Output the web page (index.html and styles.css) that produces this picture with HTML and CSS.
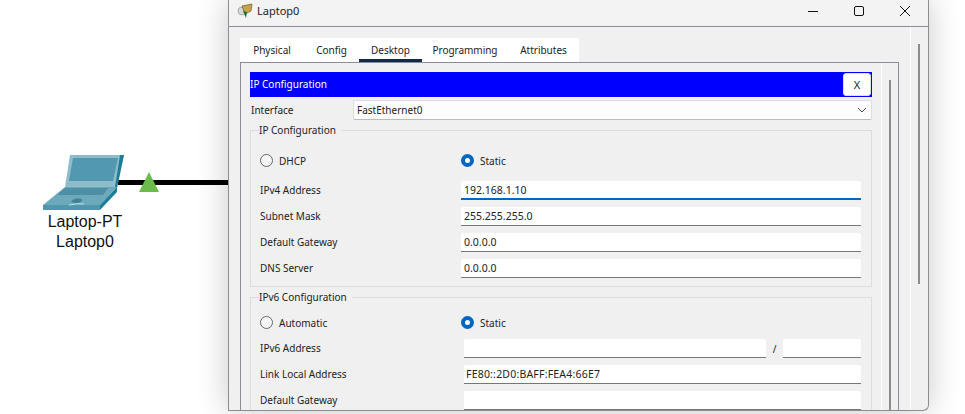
FILE: index.html
```html
<!DOCTYPE html>
<html lang="en">
<head>
    <meta charset="UTF-8">
    <title>Laptop0</title>
    <link rel="stylesheet" href="styles.css">
</head>
<body>

    <div class="canvas">
        <div class="link"></div>
        <svg class="link-light" width="20" height="20" viewBox="0 0 20 20"><polygon points="10,0 20,20 0,20" fill="#6cbb4b"/></svg>
        <div class="device">
            <svg width="82" height="56" viewBox="0 0 82 56">
                <polygon points="27,0 81,0 74,32 22,32" fill="#8fbccb"/>
                <polygon points="77,0 81,0 74,33 72,32" fill="#1c7d96"/>
                <polygon points="30,3 75,3 70,26 26,26" fill="#5298b0"/>
                <polygon points="22,32 74,32 57,50 0,50" fill="#6ca9bb"/>
                <polygon points="22,33 65,33 60,40 14,40" fill="#4d8fa5"/>
                <rect x="0" y="50" width="57" height="5" fill="#4f97ad"/>
                <polygon points="74,32 74,37 57,55 57,50" fill="#1c7d96"/>
                <path d="M28 46 q5 -4 10 -2 q3 2 -3 4 q-4 1 -7 -2z" fill="#3f8296"/>
                <path d="M26 50 q8 -2 15 -1" stroke="#c9e0e8" fill="none"/>
            </svg>
            <div class="device-name">Laptop-PT</div>
            <div class="device-name">Laptop0</div>
        </div>
    </div>

    <div class="window">
        <div class="titlebar">
            <svg class="app-icon" width="16" height="16" viewBox="0 0 16 16">
                <circle cx="5" cy="8" r="4" fill="#d9d9d9" stroke="#aaa"/>
                <polygon points="5,3 15,1 14,8 8,11" fill="#c9a24b" stroke="#6b5a20" stroke-width=".7"/>
                <polygon points="6,8 10,9 9,15" fill="#0d7a2c"/>
            </svg>
            <span class="title">Laptop0</span>
            <div class="win-buttons">
                <svg width="12" height="12" viewBox="0 0 12 12"><path d="M1 6.500h10" stroke="#111" fill="none"/></svg>
                <svg width="12" height="12" viewBox="0 0 12 12"><rect x="1.500" y="1.500" width="9" height="9" rx="1.500" stroke="#111" fill="none"/></svg>
                <svg width="12" height="12" viewBox="0 0 12 12"><path d="M1 1l10 10M11 1L1 11" stroke="#111" fill="none"/></svg>
            </div>
        </div>

        <div class="window-body">
            <div class="main">
                <div class="tabs">
                    <div class="tab tab-physical">Physical</div>
                    <div class="tab tab-config">Config</div>
                    <div class="tab tab-desktop active">Desktop</div>
                    <div class="tab tab-programming">Programming</div>
                    <div class="tab tab-attributes">Attributes</div>
                </div>

                <div class="panel">
                    <div class="panel-main">
                        <div class="blue-bar">
                            <span class="bar-title">IP Configuration</span>
                            <button class="close-btn">X</button>
                        </div>

                        <div class="interface-row">
                            <label>Interface</label>
                            <div class="select">
                                <span>FastEthernet0</span>
                                <svg width="10" height="6" viewBox="0 0 10 6"><path d="M1 1l4 4 4-4" stroke="#555" fill="none"/></svg>
                            </div>
                        </div>

                        <fieldset class="group group-v4">
                            <legend>IP Configuration</legend>
                            <div class="radio-row">
                                <div class="radio-left"><span class="radio"></span>DHCP</div>
                                <div class="radio-right"><span class="radio checked"></span>Static</div>
                            </div>
                            <div class="field"><label>IPv4 Address</label><input class="focused" type="text" value="192.168.1.10"></div>
                            <div class="field"><label>Subnet Mask</label><input type="text" value="255.255.255.0"></div>
                            <div class="field"><label>Default Gateway</label><input type="text" value="0.0.0.0"></div>
                            <div class="field"><label>DNS Server</label><input type="text" value="0.0.0.0"></div>
                        </fieldset>

                        <fieldset class="group group-v6">
                            <legend>IPv6 Configuration</legend>
                            <div class="radio-row">
                                <div class="radio-left"><span class="radio"></span>Automatic</div>
                                <div class="radio-right"><span class="radio checked"></span>Static</div>
                            </div>
                            <div class="field v6">
                                <label>IPv6 Address</label>
                                <input class="addr" type="text">
                                <span class="slash">/</span>
                                <input class="prefix" type="text">
                            </div>
                            <div class="field v6"><label>Link Local Address</label><input class="link-local" type="text" value="FE80::2D0:BAFF:FEA4:66E7"></div>
                            <div class="field v6"><label>Default Gateway</label><input type="text"></div>
                        </fieldset>
                    </div>
                    <div class="panel-scroll"><div class="inner-thumb"></div></div>
                </div>
            </div>
            <div class="outer-scroll"><div class="outer-thumb"></div></div>
        </div>
    </div>

</body>
</html>
```

FILE: styles.css
```css
html, body {
    margin: 0;
    height: 414px;
    overflow: hidden;
}
body {
    display: flex;
    align-items: flex-start;
    background-color: #fff;
    font-family: "Noto Sans", sans-serif;
    font-size: 10px;
    color: #222;
}

/* logical workspace */
.canvas {
    position: relative;
    flex: none;
    width: 228px;
    height: 414px;
}
.link {
    position: absolute;
    left: 118px;
    top: 180px;
    width: 110px;
    height: 5px;
    background-color: #000;
}
.link-light {
    position: absolute;
    left: 139px;
    top: 172px;
}
.device {
    position: absolute;
    left: 43px;
    top: 155px;
    width: 84px;
    text-align: center;
    font-family: "Liberation Sans", sans-serif;
    font-size: 16px;
    line-height: 20px;
    color: #111;
}
.device svg {
    display: block;
    margin-bottom: 1px;
}

/* dialog */
.window {
    position: relative;
    flex: none;
    display: flex;
    flex-direction: column;
    box-sizing: border-box;
    width: 701px;
    height: 411px;
    background-color: #f0f0f0;
    border: 1px solid #8b8d94;
    border-top: none;
    border-bottom-right-radius: 6px;
    box-shadow: 0 0 32px rgba(0, 0, 0, 0.22);
}
.titlebar {
    flex: none;
    display: flex;
    align-items: center;
    box-sizing: border-box;
    height: 27px;
    padding: 0 0 5px 8px;
    background-color: #f3f3f3;
    border-bottom: 1px solid #8a8d98;
}
.app-icon {
    margin-right: 4px;
}
.title {
    font-size: 11px;
}
.win-buttons {
    display: flex;
    gap: 34px;
    margin-left: auto;
    margin-right: 17px;
}
.window-body {
    flex: 1;
    display: flex;
    min-height: 0;
}
.main {
    flex: none;
    box-sizing: border-box;
    width: 682px;
    padding: 11px 0 0 11px;
    border-right: 1px solid #fff;
}
.tabs {
    display: flex;
    width: 339px;
    height: 24px;
    background-color: #fff;
}
.tab {
    box-sizing: border-box;
    height: 24px;
    padding-top: 5px;
    text-align: center;
}
.tab-physical { width: 64px; }
.tab-config { width: 55px; }
.tab-desktop { width: 63px; }
.tab-programming { width: 86px; letter-spacing: -0.05px; }
.tab-attributes { width: 71px; }
.tab.active {
    border-bottom: 3px solid #12294a;
}
.panel {
    display: flex;
    box-sizing: border-box;
    width: 659px;
    height: 348px;
    border: 1px solid #8a8d98;
    border-bottom: none;
}
.panel-main {
    flex: none;
    box-sizing: border-box;
    width: 641px;
    padding: 9px 9px 0 9px;
    border-right: 1px solid #fff;
    overflow: hidden;
}
.panel-scroll {
    flex: 1;
    padding: 17px 0 0 7px;
}
.inner-thumb {
    width: 2px;
    height: 330px;
    background-color: #8c8c8c;
}
.outer-scroll {
    flex: 1;
    padding: 17px 0 0 7px;
}
.outer-thumb {
    width: 2px;
    height: 240px;
    background-color: #8c8c8c;
}

.blue-bar {
    display: flex;
    align-items: center;
    justify-content: space-between;
    height: 25px;
    padding-right: 1px;
    background-color: #0000ff;
    color: #fff;
}
.bar-title {
    padding-bottom: 2px;
}
.close-btn {
    width: 28px;
    height: 23px;
    padding: 0;
    background-color: #fff;
    border: 1px solid #ddd;
    border-radius: 3px;
    font-family: "Noto Sans", sans-serif;
    font-size: 11px;
    color: #222;
}
.interface-row {
    display: flex;
    align-items: center;
    margin-top: 3px;
    padding-left: 1px;
}
.interface-row label {
    width: 102px;
}
.select {
    flex: 1;
    display: flex;
    align-items: center;
    justify-content: space-between;
    box-sizing: border-box;
    height: 20px;
    padding: 0 4px 0 3px;
    background-color: #fdfdfd;
    border: 1px solid #ddd;
    border-bottom-color: #bbb;
    border-radius: 2px;
}

.group {
    box-sizing: border-box;
    width: 622px;
    min-width: 0;
    margin: 4px 0 0;
    padding: 0 10px 0 9px;
    border: 1px solid #dcdcdc;
}
.group-v4 {
    height: 163px;
}
.group-v6 {
    height: 120px;
    margin-top: 4px;
}
.group legend {
    margin-left: -1px;
    padding: 0;
    padding-right: 5px;
    line-height: 13px;
}
.radio-row {
    display: flex;
    align-items: center;
    height: 13px;
    margin-top: 17px;
}
.group-v6 .radio-row {
    margin-top: 12px;
}
.radio-left, .radio-right {
    display: flex;
    align-items: center;
    gap: 6px;
}
.radio-left {
    width: 201px;
}
.radio {
    box-sizing: border-box;
    width: 13px;
    height: 13px;
    background-color: #f5f5f5;
    border: 1px solid #666;
    border-radius: 50%;
}
.radio.checked {
    background-color: #fff;
    border: 4px solid #0067c0;
}
.field {
    display: flex;
    align-items: center;
    margin-top: 7px;
}
.radio-row + .field {
    margin-top: 14px;
}
.group-v6 .radio-row + .field {
    margin-top: 10px;
}
.field label {
    flex: none;
    width: 201px;
    padding-bottom: 2px;
}
.field.v6 label {
    width: 204px;
}
.field input {
    flex: 1;
    min-width: 0;
    box-sizing: border-box;
    height: 19px;
    padding: 0 3px;
    background-color: #fff;
    border: none;
    border-bottom: 1px solid #777;
    border-radius: 2px 2px 0 0;
    font-family: "Noto Sans", sans-serif;
    font-size: 10.5px;
    color: #222;
}
.field input.link-local {
    padding-left: 2px;
    letter-spacing: 0.2px;
}
.field input.focused {
    border-bottom: 2px solid #0067c0;
}
.field input.addr {
    flex: none;
    width: 302px;
}
.field input.prefix {
    flex: none;
    width: 78px;
}
.slash {
    flex: none;
    width: 17px;
    text-align: center;
}
```
